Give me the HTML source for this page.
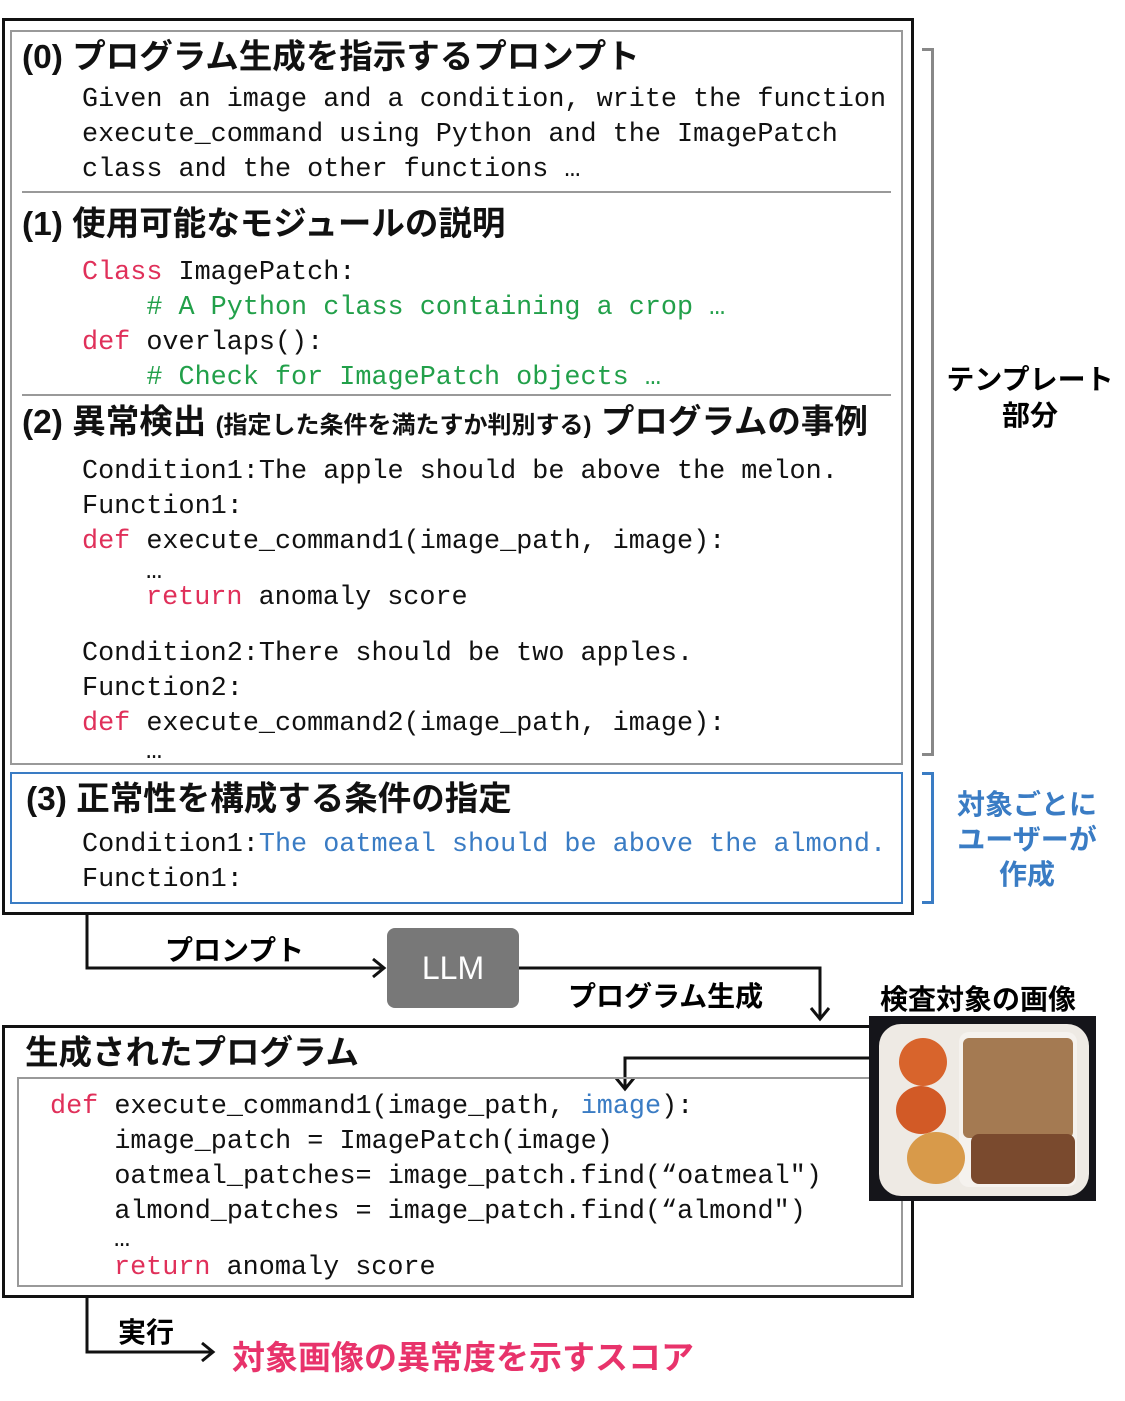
<!DOCTYPE html>
<html><head><meta charset="utf-8"><style>
body{margin:0;width:1125px;height:1401px;background:#fff;position:relative;overflow:hidden;font-family:"Liberation Sans","Noto Sans CJK JP",sans-serif}
.a{position:absolute;white-space:pre}
.m{font-family:"Liberation Mono","Noto Sans CJK JP",monospace;font-size:26.8px;line-height:35px;color:#111}
.t{font-weight:bold;font-size:33.5px;line-height:36px;color:#111;transform-origin:left center}
.r{color:#e0305a}.g{color:#22a04a}.b{color:#3a7cc4}
.box{position:absolute;box-sizing:border-box}
.hl{position:absolute;height:2px;background:#999}
</style></head><body>
<div class="box" style="left:2px;top:18px;width:912px;height:897px;border:3px solid #111"></div>
<div class="box" style="left:10px;top:30px;width:893px;height:735px;border:2px solid #999"></div>
<div class="hl" style="left:22px;top:191px;width:869px"></div>
<div class="hl" style="left:22px;top:394px;width:869px"></div>
<div class="box" style="left:10px;top:772px;width:893px;height:132px;border:2px solid #3a7cc4"></div>

<div class="a t" style="left:22px;top:40px">(0) プログラム生成を指示するプロンプト</div>
<div class="a m" style="left:82px;top:83px">Given an image and a condition, write the function
execute_command using Python and the ImagePatch
class and the other functions …</div>
<div class="a t" style="left:22px;top:207px">(1) 使用可能なモジュールの説明</div>
<div class="a m" style="left:82px;top:256px"><span class="r">Class</span> ImagePatch:
    <span class="g"># A Python class containing a crop …</span>
<span class="r">def</span> overlaps():
    <span class="g"># Check for ImagePatch objects …</span></div>
<div class="a t" style="left:22px;top:405px">(2) 異常検出 <span style="font-size:24px">(指定した条件を満たすか判別する)</span> プログラムの事例</div>
<div class="a m" style="left:82px;top:455px">Condition1:The apple should be above the melon.
Function1:</div>
<div class="a m" style="left:82px;top:525px"><span class="r">def</span> execute_command1(image_path, image):</div>
<div class="a m" style="left:146px;top:555px">…</div>
<div class="a m" style="left:146px;top:581px"><span class="r">return</span> anomaly score</div>
<div class="a m" style="left:82px;top:637px">Condition2:There should be two apples.
Function2:</div>
<div class="a m" style="left:82px;top:707px"><span class="r">def</span> execute_command2(image_path, image):</div>
<div class="a m" style="left:146px;top:735px">…</div>
<div class="a t" style="left:26px;top:782px">(3) 正常性を構成する条件の指定</div>
<div class="a m" style="left:82px;top:828px">Condition1:<span class="b">The oatmeal should be above the almond.</span>
Function1:</div>

<div class="box" style="left:922px;top:48px;width:12px;height:708px;border:3px solid #888;border-left:none"></div>
<div class="a" style="left:942px;top:362px;font-size:28px;font-weight:bold;line-height:36px;text-align:center;width:176px">テンプレート
部分</div>
<div class="box" style="left:922px;top:772px;width:12px;height:132px;border:3px solid #3a7cc4;border-left:none"></div>
<div class="a b" style="left:938px;top:787px;font-size:28px;font-weight:bold;line-height:35px;text-align:center;width:178px">対象ごとに
ユーザーが
作成</div>

<svg class="a" style="left:0;top:0" width="1125" height="1401">
<g stroke="#111" stroke-width="3" fill="none">
<path d="M87 914V968H383"/><path d="M373 959L384 968L373 977"/>
<path d="M519 968H820V1018"/><path d="M811 1008L820 1019L829 1008"/>
<path d="M869 1058H625V1088"/><path d="M616 1078L625 1089L634 1078"/>
<path d="M87 1297V1352H212"/><path d="M202 1343L213 1352L202 1361"/>
</g></svg>
<div class="a" style="left:165px;top:929px;font-size:28px;font-weight:bold">プロンプト</div>
<div class="box" style="left:387px;top:928px;width:132px;height:80px;background:#787878;border-radius:8px;color:#fff;font-size:32px;text-align:center;line-height:80px">LLM</div>
<div class="a" style="left:568px;top:975px;font-size:28px;font-weight:bold">プログラム生成</div>
<div class="a" style="left:880px;top:978px;font-size:28px;font-weight:bold">検査対象の画像</div>

<div class="box" style="left:2px;top:1025px;width:912px;height:273px;border:3px solid #111"></div>
<div class="box" style="left:17px;top:1077px;width:886px;height:210px;border:2px solid #999"></div>
<div class="a t" style="left:25px;top:1036px">生成されたプログラム</div>
<div class="a m" style="left:50px;top:1090px"><span class="r">def</span> execute_command1(image_path, <span class="b">image</span>):
    image_patch = ImagePatch(image)
    oatmeal_patches= image_patch.find(“oatmeal")
    almond_patches = image_patch.find(“almond")</div>
<div class="a m" style="left:114px;top:1223px">…</div>
<div class="a m" style="left:114px;top:1251px"><span class="r">return</span> anomaly score</div>

<div class="box" style="left:869px;top:1016px;width:227px;height:185px;background:#15151a;overflow:hidden">
<div class="box" style="left:10px;top:8px;width:210px;height:172px;background:#eeeae4;border-radius:22px"></div>
<div class="box" style="left:90px;top:16px;width:118px;height:155px;background:#f5f2ee;border-radius:10px"></div>
<div class="box" style="left:94px;top:22px;width:110px;height:100px;background:#a47a52;border-radius:6px"></div>
<div class="box" style="left:102px;top:118px;width:104px;height:50px;background:#7a4a2e;border-radius:8px"></div>
<div class="box" style="left:30px;top:22px;width:48px;height:48px;background:#d8642c;border-radius:50%"></div>
<div class="box" style="left:27px;top:70px;width:50px;height:48px;background:#d25a26;border-radius:50%"></div>
<div class="box" style="left:38px;top:116px;width:58px;height:52px;background:#d89a4a;border-radius:50%"></div>
</div>

<div class="a" style="left:118px;top:1311px;font-size:28px;font-weight:bold">実行</div>
<div class="a" style="left:232px;top:1331px;font-size:33px;font-weight:bold;color:#e8336b">対象画像の異常度を示すスコア</div>
</body></html>
